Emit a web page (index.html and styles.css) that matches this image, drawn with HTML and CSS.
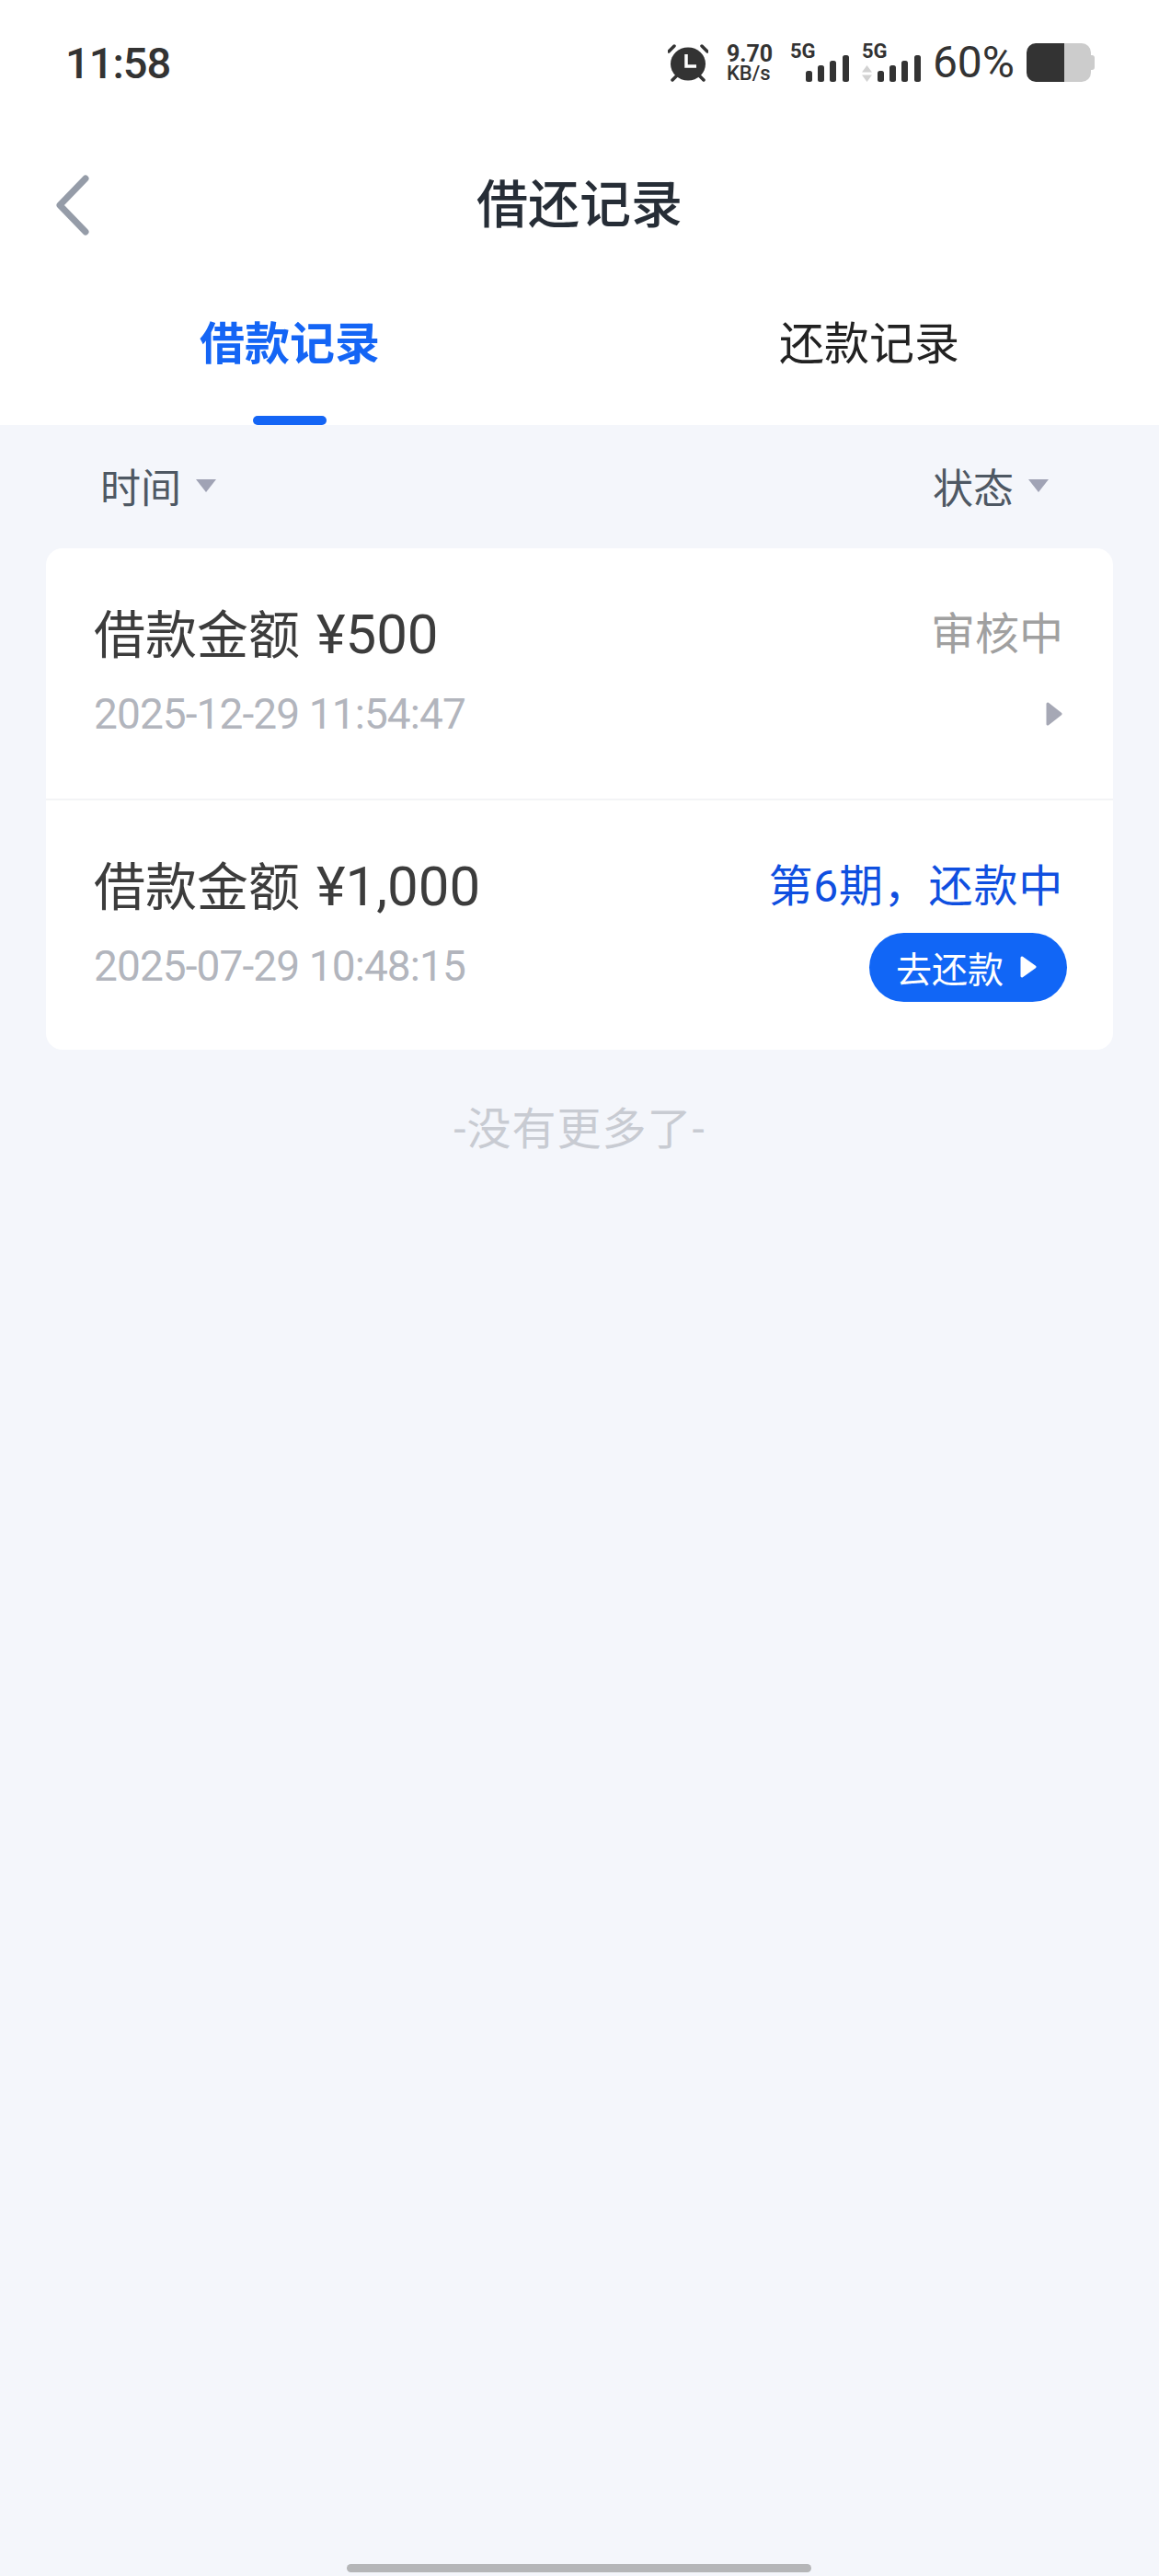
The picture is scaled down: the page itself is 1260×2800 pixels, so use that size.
FILE: index.html
```html
<!DOCTYPE html>
<html lang="zh-CN">
<head>
<meta charset="UTF-8" />
<meta name="viewport" content="width=device-width, initial-scale=1.0" />
<title>借还记录</title>
<link rel="stylesheet" href="styles.css">
</head>
<body>
  <header class="top">
    <div class="status">
      <span class="clock">11:58</span>
      <div class="status-right">
        <svg class="alarm" width="44" height="42" viewBox="0 0 44 42">
          <ellipse cx="22" cy="22.5" rx="19" ry="18" fill="#333"/>
          <path d="M1 9l6-6M43 9l-6-6M5 40l5-5M39 40l-5-5" stroke="#333" stroke-width="3.500" fill="none" stroke-linecap="round"/>
          <path d="M20 12v13h11" stroke="#fff" stroke-width="3.500" fill="none"/>
        </svg>
        <div class="speed"><span>9.70</span><span class="speed-unit">KB/s</span></div>
        <div class="signal">
          <span class="net">5G</span>
          <svg class="bars" width="47" height="29" viewBox="0 0 47 29" fill="#333">
            <rect x="0" y="17" width="7" height="12" rx="2.500"/>
            <rect x="13" y="11" width="7" height="18" rx="2.500"/>
            <rect x="26" y="6" width="7" height="23" rx="2.500"/>
            <rect x="40" y="0" width="7" height="29" rx="2.500"/>
          </svg>
        </div>
        <div class="signal signal-data">
          <span class="net">5G</span>
          <svg class="arrows" width="11" height="18" viewBox="0 0 11 18" fill="#d2d2d2">
            <path d="M5.500 0 11 7.500H0zM5.500 18 0 10.500h11z"/>
          </svg>
          <svg class="bars" width="47" height="29" viewBox="0 0 47 29" fill="#333">
            <rect x="0" y="17" width="7" height="12" rx="2.500"/>
            <rect x="13" y="11" width="7" height="18" rx="2.500"/>
            <rect x="26" y="6" width="7" height="23" rx="2.500"/>
            <rect x="40" y="0" width="7" height="29" rx="2.500"/>
          </svg>
        </div>
        <span class="percent">60%</span>
        <div class="battery"></div>
      </div>
    </div>

    <div class="nav">
      <svg class="back" width="40" height="66" viewBox="0 0 40 66">
        <path d="M33 4 5 33l28 29" stroke="#959ca8" stroke-width="7" fill="none" stroke-linecap="round" stroke-linejoin="round"/>
      </svg>
      <h1 class="nav-title">借还记录</h1>
    </div>

    <div class="tabs">
      <div class="tab tab-active">借款记录</div>
      <div class="tab">还款记录</div>
    </div>
  </header>

  <div class="filters">
    <div class="filter">时间<span class="caret"></span></div>
    <div class="filter">状态<span class="caret"></span></div>
  </div>

  <div class="card">
    <div class="record">
      <div class="record-line">
        <span class="amount">借款金额 <em>¥500</em></span>
        <span class="state">审核中</span>
      </div>
      <div class="record-line record-sub">
        <span class="date">2025-12-29 11:54:47</span>
        <svg class="more" width="18" height="26" viewBox="0 0 18 26">
          <path d="M2 2 16 13 2 24z" fill="#a6a8b5" stroke="#a6a8b5" stroke-width="3" stroke-linejoin="round"/>
        </svg>
      </div>
    </div>
    <div class="record">
      <div class="record-line">
        <span class="amount">借款金额 <em>¥1,000</em></span>
        <span class="state state-active">第6期，还款中</span>
      </div>
      <div class="record-line record-sub">
        <span class="date">2025-07-29 10:48:15</span>
        <div class="repay">去还款
          <svg width="18" height="24" viewBox="0 0 18 24">
            <path d="M2 2 16 12 2 22z" fill="#fff" stroke="#fff" stroke-width="3" stroke-linejoin="round"/>
          </svg>
        </div>
      </div>
    </div>
  </div>

  <p class="end">-没有更多了-</p>

  <div class="home-bar"></div>
</body>
</html>
```

FILE: styles.css
```css
* {
  box-sizing: border-box;
}
html, body {
  height: 2800px;
}
body {
  margin: 0;
  position: relative;
  overflow: hidden;
  background-color: #f4f6fb;
  font-family: Roboto, "Noto Sans CJK SC", sans-serif;
}
.top {
  background-color: #fff;
}
.status {
  height: 135px;
  padding: 47px 74px 0 71px;
  display: flex;
  justify-content: space-between;
  align-items: flex-start;
}
.clock {
  font-size: 47px;
  line-height: 44px;
  font-weight: 500;
  letter-spacing: -1px;
  color: #333;
}
.status-right {
  display: flex;
  align-items: flex-start;
  height: 42px;
}
.alarm {
  margin-right: 20px;
}
.speed {
  width: 69px;
  display: flex;
  flex-direction: column;
  font-size: 25px;
  line-height: 23px;
  font-weight: 700;
  color: #333;
}
.speed-unit {
  font-size: 22px;
  line-height: 20px;
  font-weight: 500;
}
.signal {
  position: relative;
  width: 64px;
  height: 42px;
  margin-right: 14px;
}
.signal-data {
  margin-right: 13px;
}
.net {
  position: absolute;
  left: 0;
  top: -1px;
  font-size: 22px;
  line-height: 20px;
  font-weight: 700;
  color: #333;
}
.bars {
  position: absolute;
  right: 0;
  bottom: 0;
}
.arrows {
  position: absolute;
  left: 0;
  bottom: 0;
}
.percent {
  font-size: 48px;
  line-height: 42px;
  color: #333;
  margin-right: 13px;
}
.battery {
  position: relative;
  width: 70px;
  height: 42px;
  border-radius: 10px;
  background: linear-gradient(to right, #333 41px, #ccc 41px);
}
.battery::after {
  content: "";
  position: absolute;
  right: -4px;
  top: 13px;
  width: 4px;
  height: 16px;
  border-radius: 0 3px 3px 0;
  background-color: #ccc;
}
.nav {
  position: relative;
  height: 175px;
  display: flex;
  align-items: center;
  justify-content: center;
}
.back {
  position: absolute;
  left: 60px;
  top: 55px;
}
.nav-title {
  margin: 0;
  font-size: 56px;
  line-height: 76px;
  font-weight: 500;
  color: #262d36;
}
.tabs {
  display: grid;
  grid-template-columns: 1fr 1fr;
  height: 152px;
}
.tab {
  position: relative;
  text-align: center;
  font-size: 49px;
  line-height: 66px;
  padding-top: 32px;
  color: #222;
}
.tab-active {
  font-weight: 700;
  color: #1465f5;
}
.tab-active::after {
  content: "";
  position: absolute;
  left: 275px;
  bottom: 0;
  width: 80px;
  height: 10px;
  border-radius: 5px;
  background-color: #1465f5;
}
.filters {
  height: 134px;
  padding: 36px 120px 0 109px;
  display: flex;
  justify-content: space-between;
}
.filter {
  display: flex;
  align-items: center;
  height: 60px;
  font-size: 44px;
  color: #4e5863;
}
.caret {
  width: 0;
  height: 0;
  margin-left: 16px;
  border-left: 11px solid transparent;
  border-right: 11px solid transparent;
  border-top: 14px solid #a0a3b5;
}
.card {
  margin: 0 50px;
  border-radius: 18px;
  background-color: #fff;
}
.record {
  height: 272px;
  padding: 51px 54px 0 52px;
}
.record + .record {
  height: 273px;
  border-top: 2px solid #f3f4f6;
}
.record-line {
  display: flex;
  justify-content: space-between;
  align-items: center;
  height: 76px;
}
.record-sub {
  height: 74px;
  margin-top: 16px;
}
.amount {
  font-size: 56px;
  color: #3c3c3c;
}
.amount em {
  font-style: normal;
  font-size: 60px;
  margin-left: 4px;
}
.state {
  font-size: 48px;
  color: #a0a0a0;
}
.state-active {
  letter-spacing: 0.800px;
  color: #0f4fe0;
}
.date {
  font-size: 46px;
  letter-spacing: -0.900px;
  color: #b2b5bd;
}
.more {
  margin-right: 1px;
}
.repay {
  display: flex;
  align-items: center;
  gap: 18px;
  flex: none;
  width: 215px;
  height: 75px;
  margin: 2px -4px 0 0;
  padding-left: 29px;
  border-radius: 38px;
  background-color: #1166f6;
  font-size: 39px;
  color: #fff;
}
.end {
  margin: 56px 0 0;
  text-align: center;
  font-size: 48px;
  letter-spacing: 1px;
  line-height: 62px;
  color: #c8cbd2;
}
.home-bar {
  position: absolute;
  left: 377px;
  top: 2787px;
  width: 505px;
  height: 9px;
  border-radius: 5px;
  background-color: #b5b6b8;
}
```
